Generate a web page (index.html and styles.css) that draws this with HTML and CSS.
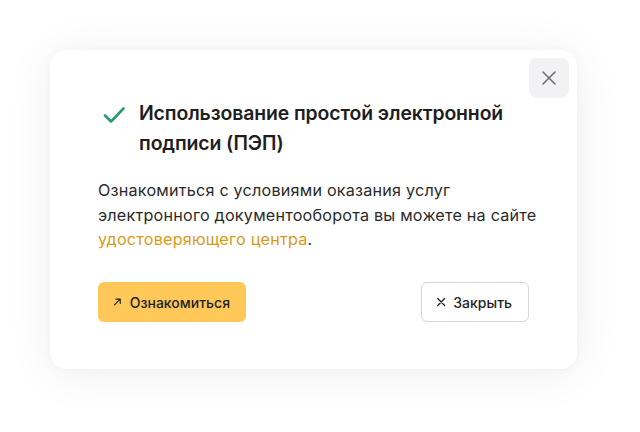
FILE: index.html
```html
<!DOCTYPE html>
<html lang="ru">
<head>
<meta charset="utf-8">
<link rel="stylesheet" href="styles.css">
</head>
<body>
<div class="stage">
  <div class="card">
    <button class="close" aria-label="Закрыть">
      <svg width="16" height="16" viewBox="0 0 16 16"><path d="M2 2L14 14M14 2L2 14" stroke="#6e6e76" stroke-width="1.6" stroke-linecap="round"/></svg>
    </button>
    <div class="head">
      <svg class="check" width="22" height="18" viewBox="0 0 22 18"><path d="M2 9.5L8 15.5L20.5 2.5" fill="none" stroke="#2b9a6f" stroke-width="2.6" stroke-linecap="round" stroke-linejoin="round"/></svg>
      <h1 class="title">Использование простой электронной подписи (ПЭП)</h1>
    </div>
    <p class="text">Ознакомиться с условиями оказания услуг электронного документооборота вы можете на сайте <a class="link" href="#">удостоверяющего центра</a>.</p>
    <div class="actions">
      <button class="btn btn-primary">
        <svg width="12" height="12" viewBox="0 0 12 12"><path d="M2 10L10 2M4 2H10V8" fill="none" stroke="#1f1f1f" stroke-width="1.5" stroke-linecap="round" stroke-linejoin="round"/></svg>
        Ознакомиться
      </button>
      <button class="btn btn-secondary">
        <svg width="12" height="12" viewBox="0 0 12 12"><path d="M2 2L10 10M10 2L2 10" stroke="#1f1f1f" stroke-width="1.5" stroke-linecap="round"/></svg>
        Закрыть
      </button>
    </div>
  </div>
</div>
</body>
</html>
```
FILE: styles.css
```css
* { box-sizing: border-box; }
html, body { margin: 0; padding: 0; }
body {
  background: #ffffff;
  font-family: Inter, "Noto Sans", "Liberation Sans", sans-serif;
  color: #1f1f1f;
  width: 640px;
  height: 432px;
  overflow: hidden;
}
.stage {
  padding: 50px 63px 0 50px;
}
.card {
  position: relative;
  width: 527px;
  height: 319px;
  background: #fff;
  border-radius: 16px;
  box-shadow: 0 4px 48px rgba(20, 20, 60, 0.07), 0 0 8px rgba(20, 20, 60, 0.03);
  padding: 48px 20px 47px 48px;
  display: flex;
  flex-direction: column;
}
.close {
  position: absolute;
  top: 8px;
  right: 8px;
  width: 40px;
  height: 40px;
  border: none;
  border-radius: 8px;
  background: #f2f2f4;
  display: flex;
  align-items: center;
  justify-content: center;
  padding: 0;
}
.head {
  display: flex;
  align-items: flex-start;
  gap: 14px;
  margin-left: 5px;
  padding-right: 20px;
}
.check { flex: none; margin-top: 8px; }
.title {
  margin: 0;
  font-size: 19.4px;
  line-height: 30px;
  font-weight: 600;
  color: #1e1e1e;
  letter-spacing: -0.1px;
}
.text {
  margin: 20px 0 0 0;
  font-size: 16.2px;
  line-height: 24.5px;
  letter-spacing: 0.2px;
  color: #2a2a2a;
}
.link {
  color: #dc9a14;
  text-decoration: none;
}
.actions {
  margin-top: auto;
  display: flex;
  justify-content: space-between;
  padding-right: 28px;
}
.btn {
  height: 40px;
  border-radius: 6px;
  font-family: inherit;
  font-size: 14px;
  font-weight: 500;
  color: #1f1f1f;
  display: flex;
  align-items: center;
  gap: 8px;
  padding: 0 16px 0 15px;
}
.btn-primary {
  width: 148px;
  background: #ffc858;
  border: none;
}
.btn-secondary {
  width: 108px;
  background: #fff;
  border: 1px solid #d6d6da;
  gap: 7px;
  padding-left: 14px;
}
```
